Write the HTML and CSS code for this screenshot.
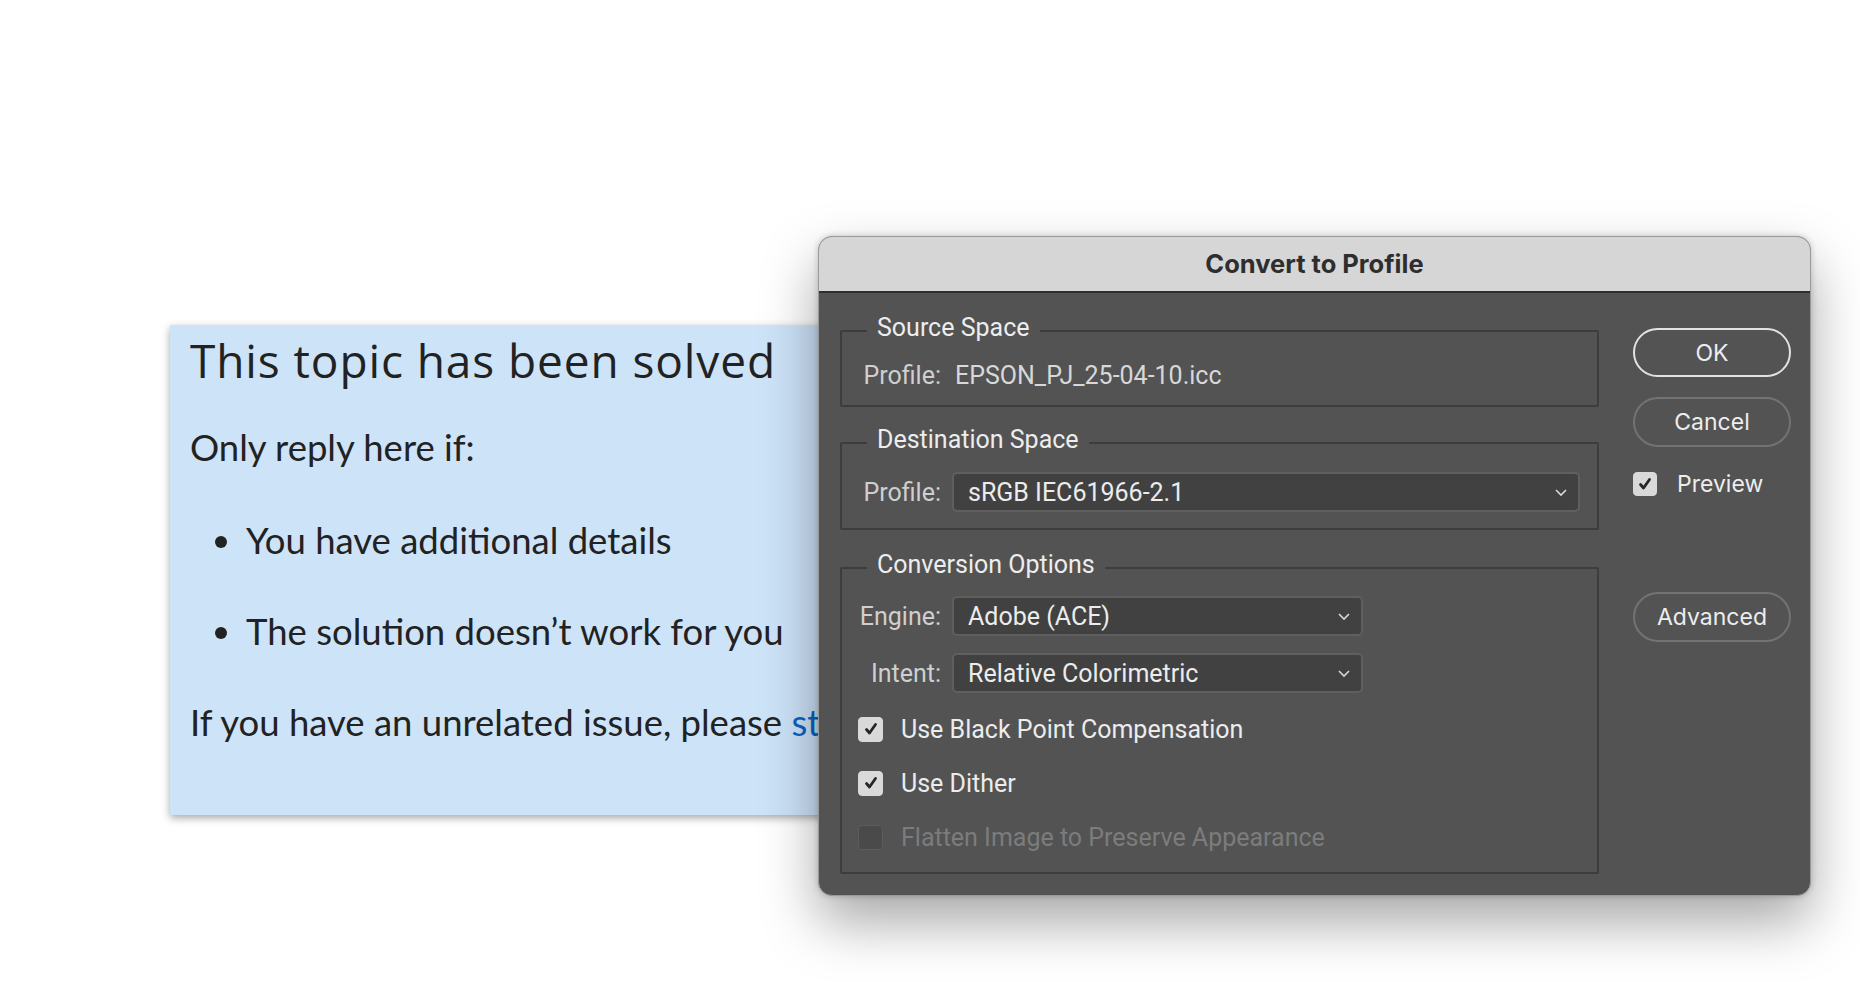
FILE: index.html
```html
<!DOCTYPE html>
<html lang="en">
<head>
    <meta charset="UTF-8">
    <meta name="viewport" content="width=device-width, initial-scale=1.0">
    <title>Convert to Profile</title>
    <link rel="stylesheet" href="styles.css">
</head>
<body>
    <div class="stage">
        <div class="solved-box">
            <h1>This topic has been solved</h1>
            <p class="lead">Only reply here if:</p>
            <ul>
                <li>You have additional details</li>
                <li>The solution doesn’t work for you</li>
            </ul>
            <p class="tail">If you have an unrelated issue, please <a href="#">start a new topic</a> instead.</p>
        </div>

        <div class="dialog">
            <div class="titlebar">Convert to Profile</div>
            <div class="dialog-body">
                <div class="groups">
                    <fieldset class="group">
                        <legend>Source Space</legend>
                        <div class="row">
                            <span class="label">Profile:</span>
                            <span class="value">EPSON_PJ_25-04-10.icc</span>
                        </div>
                    </fieldset>

                    <fieldset class="group dest">
                        <legend>Destination Space</legend>
                        <div class="row">
                            <span class="label">Profile:</span>
                            <div class="select wide">
                                <span>sRGB IEC61966-2.1</span>
                                <svg width="14" height="9" viewBox="0 0 14 9"><path d="M2 2l5 5 5-5" fill="none" stroke="#d8d8d8" stroke-width="1.6"/></svg>
                            </div>
                        </div>
                    </fieldset>

                    <fieldset class="group conv">
                        <legend>Conversion Options</legend>
                        <div class="row">
                            <span class="label">Engine:</span>
                            <div class="select">
                                <span>Adobe (ACE)</span>
                                <svg width="14" height="9" viewBox="0 0 14 9"><path d="M2 2l5 5 5-5" fill="none" stroke="#d8d8d8" stroke-width="1.6"/></svg>
                            </div>
                        </div>
                        <div class="row intent">
                            <span class="label">Intent:</span>
                            <div class="select">
                                <span>Relative Colorimetric</span>
                                <svg width="14" height="9" viewBox="0 0 14 9"><path d="M2 2l5 5 5-5" fill="none" stroke="#d8d8d8" stroke-width="1.6"/></svg>
                            </div>
                        </div>
                        <div class="check-row">
                            <span class="checkbox checked">
                                <svg width="16" height="16" viewBox="0 0 16 16"><path d="M3.5 8.5l3 3.5 6-8.5" fill="none" stroke="#262626" stroke-width="2.8" stroke-linecap="round" stroke-linejoin="round"/></svg>
                            </span>
                            <span>Use Black Point Compensation</span>
                        </div>
                        <div class="check-row">
                            <span class="checkbox checked">
                                <svg width="16" height="16" viewBox="0 0 16 16"><path d="M3.5 8.5l3 3.5 6-8.5" fill="none" stroke="#262626" stroke-width="2.8" stroke-linecap="round" stroke-linejoin="round"/></svg>
                            </span>
                            <span>Use Dither</span>
                        </div>
                        <div class="check-row disabled">
                            <span class="checkbox"></span>
                            <span>Flatten Image to Preserve Appearance</span>
                        </div>
                    </fieldset>
                </div>

                <div class="actions">
                    <button class="btn default">OK</button>
                    <button class="btn cancel">Cancel</button>
                    <div class="preview">
                        <span class="checkbox checked small">
                            <svg width="16" height="16" viewBox="0 0 16 16"><path d="M3.5 8.5l3 3.5 6-8.5" fill="none" stroke="#262626" stroke-width="2.8" stroke-linecap="round" stroke-linejoin="round"/></svg>
                        </span>
                        <span>Preview</span>
                    </div>
                    <button class="btn advanced">Advanced</button>
                </div>
            </div>
        </div>
    </div>
</body>
</html>
```

FILE: styles.css
```css
body {
    margin: 0;
    background: #ffffff;
    font-family: Roboto, "Liberation Sans", sans-serif;
}

.stage {
    position: relative;
    width: 1860px;
    height: 982px;
    overflow: hidden;
}

/* community notice behind the dialog */
.solved-box {
    margin: 325px 0 0 170px;
    width: 720px;
    padding: 10px 0 71px 20px;
    background: #cde3f8;
    box-shadow: 0 3px 8px rgba(0, 0, 0, 0.35);
    color: #222222;
    white-space: nowrap;
    overflow: hidden;
}

.solved-box h1 {
    margin: 0;
    font-family: "Open Sans", sans-serif;
    font-weight: 400;
    font-size: 46px;
    line-height: 50px;
    letter-spacing: 0.9px;
}

.solved-box p,
.solved-box li {
    font-family: Lato, sans-serif;
    font-size: 36.5px;
    line-height: 44px;
}

.solved-box .lead {
    margin: 40px 0 0;
}

.solved-box ul {
    margin: 0;
    padding-left: 56px;
}

.solved-box li {
    margin-top: 49px;
}

.solved-box li + li {
    margin-top: 47px;
}

.solved-box .tail {
    margin: 47px 0 0;
}

.solved-box a {
    color: #0a63c4;
    text-decoration: none;
}

/* photoshop dialog */
.dialog {
    position: absolute;
    left: 818px;
    top: 236px;
    width: 993px;
    height: 660px;
    box-sizing: border-box;
    background: #535353;
    border: 1px solid #9a9a9a;
    border-radius: 14px;
    overflow: hidden;
    box-shadow: 0 26px 56px rgba(0, 0, 0, 0.35), 0 0 6px rgba(0, 0, 0, 0.2);
    color: #e4e4e4;
}

.titlebar {
    height: 54px;
    line-height: 54px;
    background: #d6d6d6;
    border-bottom: 2px solid #2e2e2e;
    text-align: center;
    font-family: Inter, sans-serif;
    font-weight: 700;
    font-size: 25.5px;
    color: #2e2e2e;
}

.dialog-body {
    display: flex;
    padding: 20px 19px 0 21px;
}

.groups {
    width: 759px;
}

.group {
    margin: 0;
    padding: 11px 17px 15px 16px;
    border: 2px solid #3d3d3d;
    border-radius: 2px;
}

.group legend {
    margin-left: 9px;
    padding: 0 10px 6px;
    font-size: 25px;
    line-height: 30px;
    color: #ededed;
}

.group.dest {
    margin-top: 18px;
    padding-bottom: 16px;
}

.group.conv {
    margin-top: 20px;
    padding-top: 10px;
    padding-bottom: 20px;
}

.row {
    display: flex;
    align-items: center;
    gap: 11px;
    min-height: 30px;
    font-size: 25px;
}

.row .label {
    width: 83px;
    text-align: right;
    color: #cfcfcf;
}

.row .value {
    margin-left: 3px;
    color: #d8d8d8;
}

.row.intent {
    margin-top: 17px;
}

.select {
    display: flex;
    align-items: center;
    justify-content: space-between;
    width: 411px;
    height: 40px;
    box-sizing: border-box;
    padding: 0 10px 0 14px;
    background: #414141;
    border: 2px solid #5f5f5f;
    border-radius: 5px;
    color: #ececec;
}

.select.wide {
    width: 628px;
}

.check-row {
    display: flex;
    align-items: center;
    gap: 18px;
    height: 30px;
    margin-top: 21px;
    font-size: 25px;
    color: #ececec;
}

.check-row + .check-row {
    margin-top: 24px;
}

.check-row.disabled {
    color: #7c7c7c;
}

.checkbox {
    display: flex;
    align-items: center;
    justify-content: center;
    width: 25px;
    height: 25px;
    box-sizing: border-box;
    border-radius: 4px;
    background: #4a4a4a;
    border: 1px solid #5c5c5c;
}

.checkbox.checked {
    background: #d9d9d9;
    border-color: #d9d9d9;
}

.checkbox.small {
    width: 24px;
    height: 24px;
}

.actions {
    display: flex;
    flex-direction: column;
    width: 158px;
    margin-left: 34px;
    padding-top: 15px;
}

.btn {
    height: 50px;
    box-sizing: border-box;
    border-radius: 25px;
    background: transparent;
    border: 2px solid #737373;
    font-family: Inter, sans-serif;
    font-size: 23px;
    color: #ededed;
}

.btn.default {
    height: 49px;
    border-color: #e2e2e2;
}

.btn.cancel {
    margin-top: 20px;
}

.preview {
    display: flex;
    align-items: center;
    gap: 20px;
    height: 30px;
    margin-top: 22px;
    font-family: Inter, sans-serif;
    font-size: 23px;
    color: #ededed;
}

.btn.advanced {
    margin-top: 93px;
}
```
